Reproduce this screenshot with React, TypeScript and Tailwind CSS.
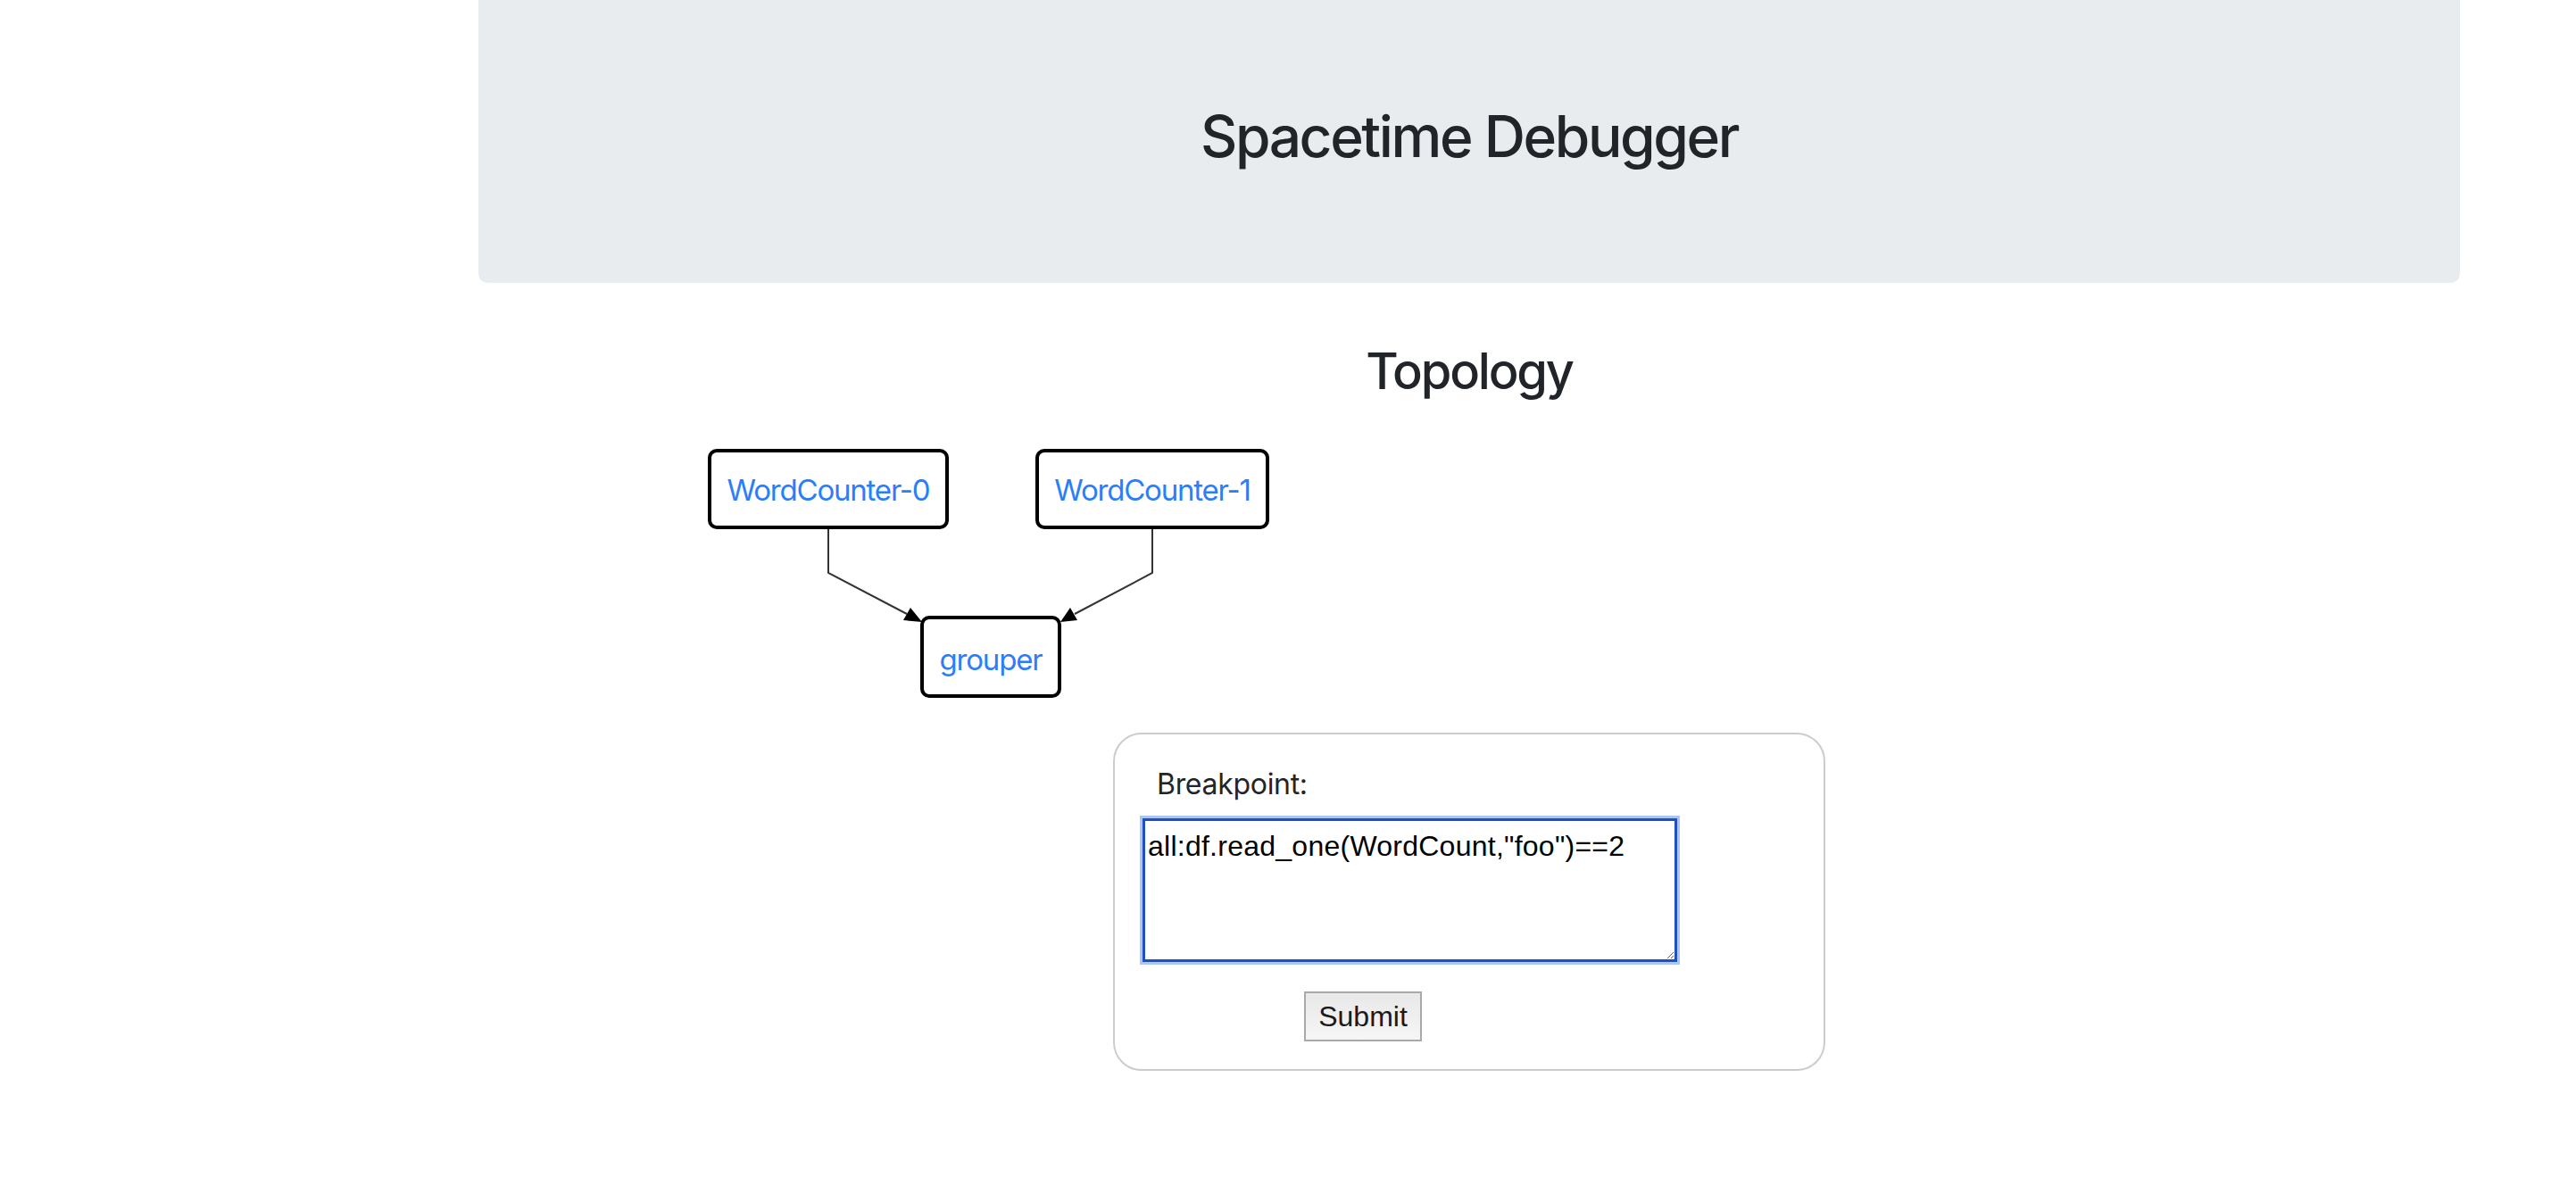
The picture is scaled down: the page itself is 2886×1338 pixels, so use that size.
// Spacetime debugger page: header, topology graph and breakpoint form

const sans = "font-['Inter','Noto_Sans',sans-serif]"

const Topology = () => (
  <svg width="660" height="300" viewBox="0 0 660 300" className="block ml-[244px] mt-[51px]">
    {/* edges */}
    <path d="M148 98 L148 147 L236 193" fill="none" stroke="#333" strokeWidth="2" />
    <polygon points="253,202 232,200 240,186" fill="#000" />
    <path d="M511 98 L511 147 L424 193" fill="none" stroke="#333" strokeWidth="2" />
    <polygon points="408,202 427,200 419,186" fill="#000" />

    {/* nodes */}
    <rect x="15" y="10" width="266" height="86" rx="8" fill="#fff" stroke="#000" strokeWidth="4" />
    <text x="148" y="66" textAnchor="middle" fill="#2a7ef7" fontSize="33" letterSpacing="-1.2" fontFamily="Inter, sans-serif">
      WordCounter-0
    </text>
    <rect x="382" y="10" width="258" height="86" rx="8" fill="#fff" stroke="#000" strokeWidth="4" />
    <text x="511" y="66" textAnchor="middle" fill="#2a7ef7" fontSize="33" letterSpacing="-1.2" fontFamily="Inter, sans-serif">
      WordCounter-1
    </text>
    <rect x="253" y="197" width="154" height="88" rx="8" fill="#fff" stroke="#000" strokeWidth="4" />
    <text x="330" y="256" textAnchor="middle" fill="#2a7ef7" fontSize="33" letterSpacing="-1.2" fontFamily="Inter, sans-serif">
      grouper
    </text>
  </svg>
)

const BreakpointForm = () => (
  <form
    className="mx-auto mt-[26px] w-[798px] h-[379px] border-2 border-[#cccccc] rounded-[32px] pt-[40px]"
    onSubmit={(e) => e.preventDefault()}
  >
    <div className={`${sans} text-[32px] leading-none tracking-[-0.3px] text-[#212529] pl-[47px]`}>Breakpoint:</div>
    <textarea
      className="block ml-[31px] mt-[22px] w-[599px] h-[161px] border-[3px] border-[#1f4fc0] shadow-[0_0_0_3px_#a9c6f7] outline-none pl-[3px] pt-[12px] font-['Liberation_Sans',Arial,sans-serif] text-[32px] tracking-[0.25px] leading-none text-black"
      defaultValue={'all:df.read_one(WordCount,"foo")==2'}
    />
    <button
      type="submit"
      className="block ml-[212px] mt-[33px] w-[132px] h-[56px] border-2 border-[#a9a9a9] bg-gradient-to-b from-[#e8e8e8] to-[#f6f6f6] font-['Liberation_Sans',Arial,sans-serif] text-[32px] leading-none text-[#1a1a1a]"
    >
      Submit
    </button>
  </form>
)

export default function App() {
  return (
    <div className="w-[2886px] min-h-[1338px] bg-white">
      <div className="ml-[536px] w-[2220px]">
        {/* jumbotron */}
        <div className="h-[317px] bg-[#e9ecef] rounded-b-[10px] flex items-center justify-center pb-[12px]">
          <h1 className={`${sans} text-[64px] font-medium tracking-[-2.4px] text-[#212529] leading-none`}>
            Spacetime Debugger
          </h1>
        </div>

        <h2 className={`${sans} mt-[71px] text-center text-[56px] font-medium tracking-[-2.2px] text-[#212529] leading-none`}>
          Topology
        </h2>

        <Topology />
        <BreakpointForm />
      </div>
    </div>
  )
}
